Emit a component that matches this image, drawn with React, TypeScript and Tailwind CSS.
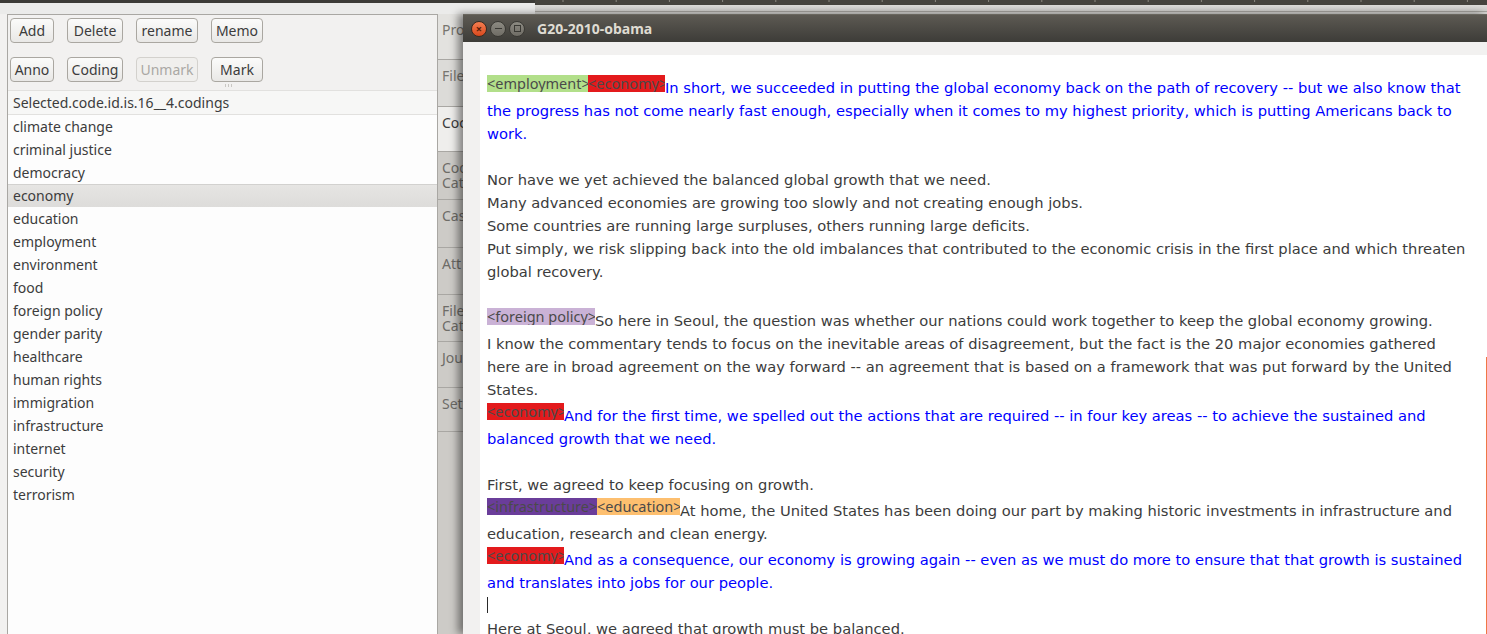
import React from "react";

const Btn = ({ w, children, disabled }: { w: string; children: React.ReactNode; disabled?: boolean }) => (
  <div
    className={`${w} h-[25px] flex items-center justify-center rounded-[4px] border text-[14px] ${
      disabled
        ? "border-[#d3d1cd] text-[#aaa8a4] bg-[#f0efed]"
        : "border-[#aaa7a1] text-[#3c3c3c] bg-linear-to-b from-[#fbfbfa] to-[#e9e8e6]"
    }`}
  >
    {children}
  </div>
);

const Tag = ({ w, bg, children }: { w: string; bg: string; children: React.ReactNode }) => (
  <div
    className={`${w} ${bg} h-[17px] mt-[2px] shrink-0 overflow-hidden whitespace-nowrap text-[14.5px] leading-[17px] text-[#4a4a4a] font-['Noto_Sans',sans-serif]`}
  >
    {children}
  </div>
);

const Line = ({ children, blue }: { children?: React.ReactNode; blue?: boolean }) => (
  <div className={`h-[23px] leading-[23px] whitespace-nowrap ${blue ? "text-[#0000ff]" : "text-[#3c3c3c]"}`}>{children}</div>
);

const TagLine = ({ tags, children, blue }: { tags: React.ReactNode; children: React.ReactNode; blue?: boolean }) => (
  <div className="h-[26px] flex items-start whitespace-nowrap">
    {tags}
    <span className={`mt-[3px] leading-[23px] ${blue ? "text-[#0000ff]" : "text-[#3c3c3c]"}`}>{children}</span>
  </div>
);

const codes = [
  "climate change",
  "criminal justice",
  "democracy",
  "economy",
  "education",
  "employment",
  "environment",
  "food",
  "foreign policy",
  "gender parity",
  "healthcare",
  "human rights",
  "immigration",
  "infrastructure",
  "internet",
  "security",
  "terrorism",
];

const tabs: { l: string[]; h: string; bg: string; tc: string }[] = [
  { l: ["Pro"], h: "h-[46px]", bg: "bg-[#e3e2df]", tc: "text-[#77756f]" },
  { l: ["File"], h: "h-[47px]", bg: "bg-[#dcdbd8]", tc: "text-[#77756f]" },
  { l: ["Coc"], h: "h-[45px]", bg: "bg-[#efeeec]", tc: "text-[#3c3c3c]" },
  { l: ["Cod", "Cat"], h: "h-[48px]", bg: "bg-[#cdcbc7]", tc: "text-[#6e6c67]" },
  { l: ["Cas"], h: "h-[48px]", bg: "bg-[#cdcbc7]", tc: "text-[#6e6c67]" },
  { l: ["Att"], h: "h-[47px]", bg: "bg-[#cdcbc7]", tc: "text-[#6e6c67]" },
  { l: ["File", "Cat"], h: "h-[47px]", bg: "bg-[#cdcbc7]", tc: "text-[#6e6c67]" },
  { l: ["Jou"], h: "h-[46px]", bg: "bg-[#cdcbc7]", tc: "text-[#6e6c67]" },
  { l: ["Set"], h: "h-[44px]", bg: "bg-[#cdcbc7]", tc: "text-[#6e6c67]" },
];

const ticks = Array.from({ length: 18 }, (_, i) => 28 + i * 53.2);

export default function App() {
  return (
    <div className="relative w-[1487px] h-[634px] overflow-hidden bg-[#f2f1f0] font-['Noto_Sans',sans-serif]">
      {/* top strip */}
      <div className="flex h-[14px]">
        <div className="w-[535px] flex flex-col">
          <div className="h-[3px] bg-[#3c3b37]" />
          <div className="flex-1 bg-[#ebebea]" />
        </div>
        <div className="flex-1 flex flex-col">
          <svg width="952" height="5" className="block bg-[#46443e]">
            {ticks.map((x) => (
              <line key={x} x1={x} x2={x} y1="0" y2="2" stroke="#8c8980" strokeWidth="1" />
            ))}
          </svg>
          <div className="h-[6px] bg-linear-to-b from-[#dddcd9] to-[#cfcecb]" />
          <div className="h-px bg-[#a6a49f]" />
          <div className="flex-1 bg-[#d4d3d0]" />
        </div>
      </div>

      {/* background window */}
      <div className="flex h-[620px]">
        <div className="w-[7px]" />
        <div className="w-[431px] border-l border-t border-r border-[#a9a7a3] flex flex-col bg-[#f2f1f0]">
          <div className="pl-[2px] pt-[3px] flex flex-col gap-[14px]">
            <div className="flex gap-[13px]">
              <Btn w="w-[44px]">Add</Btn>
              <Btn w="w-[56px]">Delete</Btn>
              <Btn w="w-[62px]">rename</Btn>
              <Btn w="w-[52px]">Memo</Btn>
            </div>
            <div className="flex gap-[13px]">
              <Btn w="w-[44px]">Anno</Btn>
              <Btn w="w-[56px]">Coding</Btn>
              <Btn w="w-[62px]" disabled>
                Unmark
              </Btn>
              <Btn w="w-[52px]">Mark</Btn>
            </div>
          </div>
          <div className="h-[8px] flex justify-center pt-[2px]">
            <div className="flex gap-[2px] translate-x-[6px]">
              <div className="w-px h-[3px] bg-[#c9c7c3]" />
              <div className="w-px h-[3px] bg-[#c9c7c3]" />
              <div className="w-px h-[3px] bg-[#c9c7c3]" />
            </div>
          </div>
          <div className="h-[25px] bg-[#f7f7f6] border-t border-b border-[#e2e1df] pl-[5px] flex items-center text-[14px] text-[#3c3c3c]">
            Selected.code.id.is.16__4.codings
          </div>
          <div className="flex-1 bg-[#fdfdfd] flex flex-col">
            {codes.map((c) => (
              <div
                key={c}
                className={`h-[23px] pl-[5px] text-[14px] text-[#3c3c3c] ${
                  c === "economy"
                    ? "bg-linear-to-b from-[#e6e5e3] to-[#dddcda] border-t border-[#d2d1cf] leading-[22px]"
                    : "leading-[23px]"
                }`}
              >
                {c}
              </div>
            ))}
          </div>
        </div>
        <div className="w-[25px] flex flex-col bg-[#cdcbc7]">
          {tabs.map((t, i) => (
            <div
              key={i}
              className={`${t.h} ${t.bg} ${t.tc} border-b border-[#a9a7a3] pt-[8px] pl-[4px] text-[14px] leading-[15px] overflow-hidden whitespace-nowrap`}
            >
              {t.l.map((s) => (
                <div key={s}>{s}</div>
              ))}
            </div>
          ))}
          <div className="flex-1 bg-[#cdcbc7]" />
        </div>
      </div>

      {/* main document window */}
      <div className="absolute left-[463px] top-[14px] w-[1024px] h-[620px] flex flex-col bg-[#f2f1f0] shadow-[-5px_0_8px_rgba(0,0,0,0.45)]">
        <div className="h-[28px] shrink-0 flex items-center bg-linear-to-b from-[#5d5a53] to-[#3d3c38] border-t border-[#6a675f]">
          <div className="flex gap-[3px] pl-[8px]">
            <div className="w-[16px] h-[16px] rounded-full bg-linear-to-b from-[#f47d4f] to-[#d8481c] border border-[#3a2a20] flex items-center justify-center">
              <span className="text-[11px] leading-none text-[#5a1e08] font-bold mt-[-1px]">×</span>
            </div>
            <div className="w-[16px] h-[16px] rounded-full bg-linear-to-b from-[#8c8a82] to-[#6f6c65] border border-[#3a3934] flex items-center justify-center">
              <div className="w-[7px] h-[1.5px] bg-[#3a3934]" />
            </div>
            <div className="w-[16px] h-[16px] rounded-full bg-linear-to-b from-[#8c8a82] to-[#6f6c65] border border-[#3a3934] flex items-center justify-center">
              <div className="w-[7px] h-[7px] border border-[#3a3934]" />
            </div>
          </div>
          <div className="ml-[12px] text-[14px] font-bold text-[#dfdbd2]">G20-2010-obama</div>
        </div>
        <div className="flex-1 pt-[13px] pl-[17px] flex">
          <div className="relative flex-1 bg-white pt-[18px] pl-[7px] text-[14.7px] font-['DejaVu_Sans',sans-serif] overflow-hidden">
            <div className="absolute right-0 top-[302px] bottom-0 w-px bg-[#f07746]" />
            <TagLine
              blue
              tags={
                <>
                  <Tag w="w-[101px]" bg="bg-[#b2df8a]">&lt;employment&gt;</Tag>
                  <Tag w="w-[77px]" bg="bg-[#e31a1c]">&lt;economy&gt;</Tag>
                </>
              }
            >
              In short, we succeeded in putting the global economy back on the path of recovery -- but we also know that
            </TagLine>
            <Line blue>
              the progress has not come nearly fast enough, especially when it comes to my highest priority, which is putting Americans back to
            </Line>
            <Line blue>work.</Line>
            <Line />
            <Line>Nor have we yet achieved the balanced global growth that we need.</Line>
            <Line>Many advanced economies are growing too slowly and not creating enough jobs.</Line>
            <Line>Some countries are running large surpluses, others running large deficits.</Line>
            <Line>
              Put simply, we risk slipping back into the old imbalances that contributed to the economic crisis in the first place and which threaten
            </Line>
            <Line>global recovery.</Line>
            <Line />
            <TagLine tags={<Tag w="w-[108px]" bg="bg-[#cab2d6]">&lt;foreign policy&gt;</Tag>}>
              So here in Seoul, the question was whether our nations could work together to keep the global economy growing.
            </TagLine>
            <Line>
              I know the commentary tends to focus on the inevitable areas of disagreement, but the fact is the 20 major economies gathered
            </Line>
            <Line>
              here are in broad agreement on the way forward -- an agreement that is based on a framework that was put forward by the United
            </Line>
            <Line>States.</Line>
            <TagLine blue tags={<Tag w="w-[77px]" bg="bg-[#e31a1c]">&lt;economy&gt;</Tag>}>
              And for the first time, we spelled out the actions that are required -- in four key areas -- to achieve the sustained and
            </TagLine>
            <Line blue>balanced growth that we need.</Line>
            <Line />
            <Line>First, we agreed to keep focusing on growth.</Line>
            <TagLine
              tags={
                <>
                  <Tag w="w-[110px]" bg="bg-[#6a3d9a]">&lt;infrastructure&gt;</Tag>
                  <Tag w="w-[83px]" bg="bg-[#fdbf6f]">&lt;education&gt;</Tag>
                </>
              }
            >
              At home, the United States has been doing our part by making historic investments in infrastructure and
            </TagLine>
            <Line>education, research and clean energy.</Line>
            <TagLine blue tags={<Tag w="w-[77px]" bg="bg-[#e31a1c]">&lt;economy&gt;</Tag>}>
              And as a consequence, our economy is growing again -- even as we must do more to ensure that that growth is sustained
            </TagLine>
            <Line blue>and translates into jobs for our people.</Line>
            <div className="h-[23px] pt-[3px]">
              <div className="w-px h-[16px] bg-[#2a2a2a]" />
            </div>
            <Line>Here at Seoul, we agreed that growth must be balanced.</Line>
          </div>
        </div>
      </div>
    </div>
  );
}
